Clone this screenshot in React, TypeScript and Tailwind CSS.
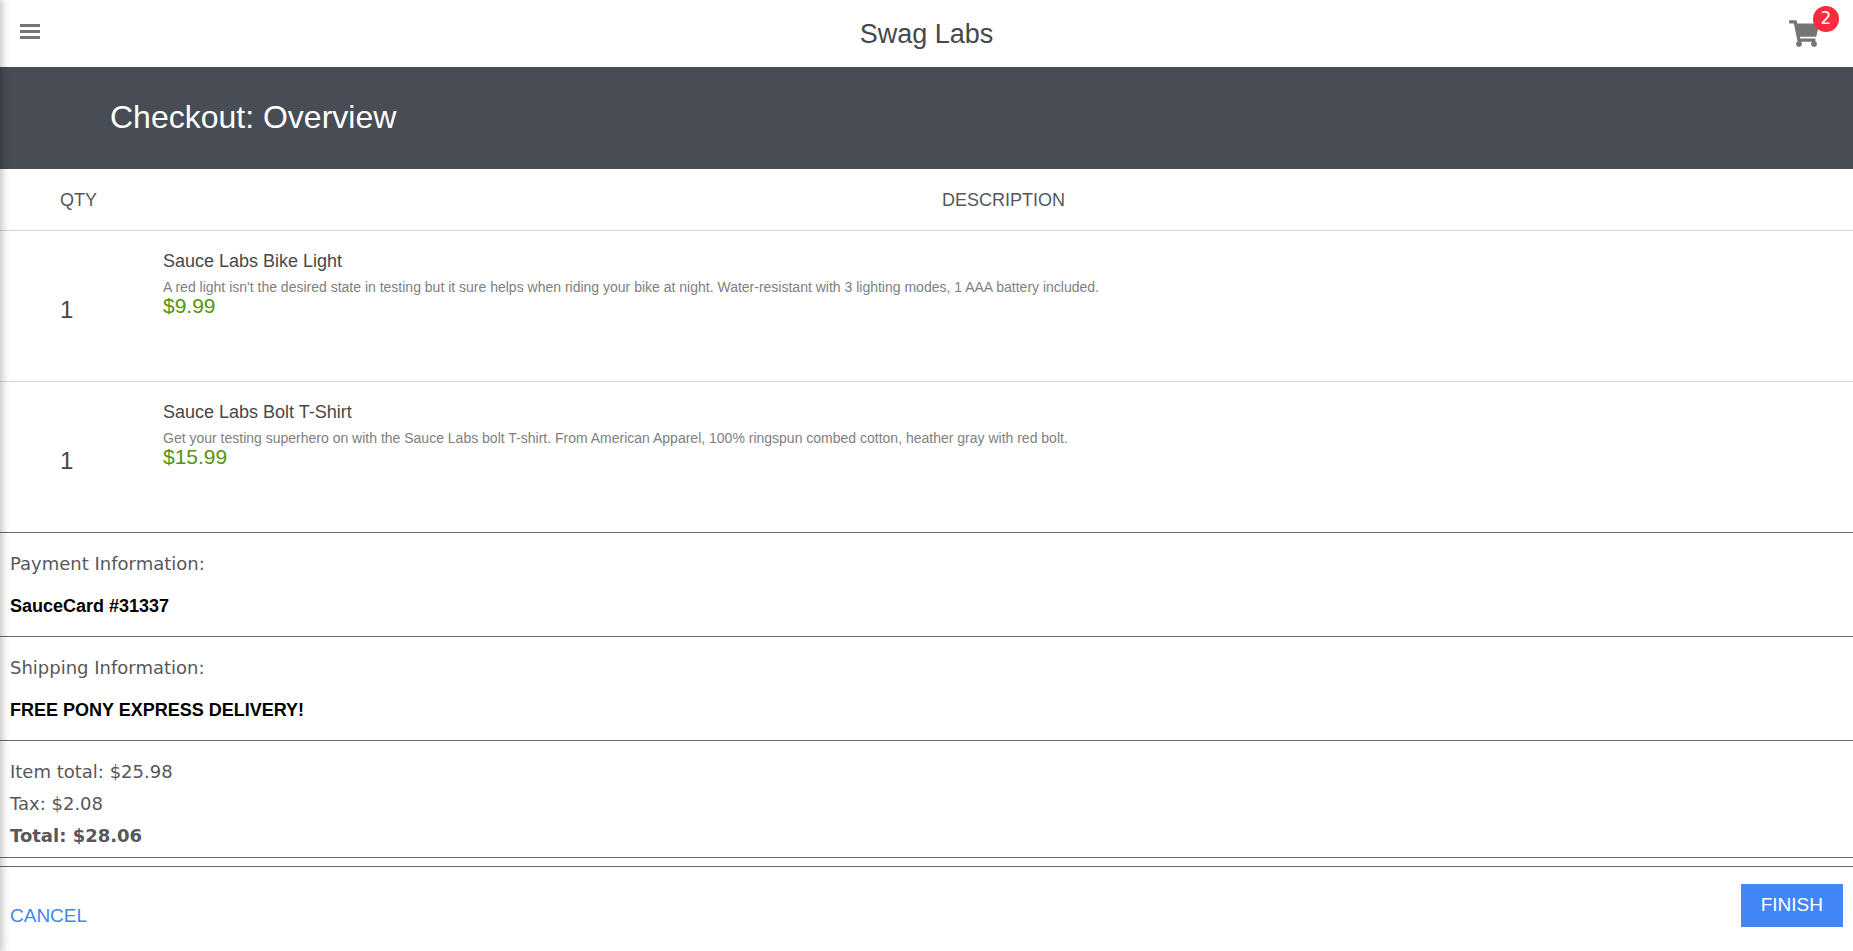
const items = [
  {
    qty: 1,
    name: "Sauce Labs Bike Light",
    description:
      "A red light isn't the desired state in testing but it sure helps when riding your bike at night. Water-resistant with 3 lighting modes, 1 AAA battery included.",
    price: "$9.99",
  },
  {
    qty: 1,
    name: "Sauce Labs Bolt T-Shirt",
    description:
      "Get your testing superhero on with the Sauce Labs bolt T-shirt. From American Apparel, 100% ringspun combed cotton, heather gray with red bolt.",
    price: "$15.99",
  },
];

function Header() {
  return (
    <header className="grid h-[67px] grid-cols-[1fr_auto_1fr] items-center bg-white px-5">
      <button type="button" aria-label="Open menu" className="mb-1 flex w-5 flex-col gap-[3px]">
        <span className="h-[3px] w-full bg-[#757575]" />
        <span className="h-[3px] w-full bg-[#757575]" />
        <span className="h-[3px] w-full bg-[#757575]" />
      </button>
      <h1 className="text-[27px] leading-8 text-[#484848]">Swag Labs</h1>
      <a href="#cart" aria-label="Cart" className="relative mr-3.5 justify-self-end">
        <svg viewBox="0 0 576 512" className="block h-[27px] w-[30px]" fill="#757575" aria-hidden="true">
          <path d="M528.12 301.319l47.273-208C578.806 78.301 567.391 64 551.99 64H159.208l-9.166-44.81C147.758 8.021 137.93 0 126.529 0H24C10.745 0 0 10.745 0 24v16c0 13.255 10.745 24 24 24h69.883l70.248 343.435C147.325 417.1 136 435.222 136 456c0 30.928 25.072 56 56 56s56-25.072 56-56c0-15.674-6.447-29.835-16.824-40h209.647C430.447 426.165 424 440.326 424 456c0 30.928 25.072 56 56 56s56-25.072 56-56c0-22.172-12.888-41.332-31.579-50.405l5.517-24.276c3.413-15.018-8.002-29.319-23.403-29.319H218.117l-6.545-32h293.145c11.206 0 20.92-7.754 23.403-18.681z" />
        </svg>
        <span className="absolute -top-3.5 -right-5 flex size-[26px] items-center justify-center rounded-full bg-[#ff2a3c] font-['DejaVu_Sans',sans-serif] text-[17px] text-white">
          2
        </span>
      </a>
    </header>
  );
}

function OrderTable() {
  return (
    <table className="w-full table-fixed border-separate border-spacing-0 text-left">
      <thead>
        <tr className="h-[62px] text-lg text-[#55575b]">
          <th scope="col" className="w-[154px] border-b border-[#d3d3d3] pl-[60px] font-normal">QTY</th>
          <th scope="col" className="border-b border-[#d3d3d3] text-center font-normal">DESCRIPTION</th>
        </tr>
      </thead>
      <tbody>
        {items.map((item) => (
          <tr key={item.name} className="group h-[151px]">
            <td className="border-b border-[#d3d3d3] pt-2 pl-[60px] text-2xl text-[#484848] group-last:border-[#6c6c70]">
              {item.qty}
            </td>
            <td className="border-b border-[#d3d3d3] pt-4 pl-[9px] align-top group-last:border-[#6c6c70]">
              <h3 className="text-lg leading-7 text-[#484848]">{item.name}</h3>
              <p className="mt-1 text-sm leading-4 text-[#808080]">{item.description}</p>
              <p className="text-[21px] leading-[22px] text-[#549608]">{item.price}</p>
            </td>
          </tr>
        ))}
      </tbody>
    </table>
  );
}

function InfoSection({ label, value }: { label: string; value: string }) {
  return (
    <section className="border-b border-[#6c6c70] px-2.5 pt-[15px] pb-4">
      <h3 className="font-['DejaVu_Sans',sans-serif] text-lg leading-8 text-[#58585a]">{label}</h3>
      <p className="mt-3 text-lg leading-7 font-bold text-black">{value}</p>
    </section>
  );
}

export default function App() {
  return (
    <div className="relative min-h-screen overflow-x-hidden bg-white font-['Liberation_Sans',Arial,sans-serif]">
      <Header />
      <main>
        <div className="flex h-[102px] items-center bg-[#484c55] px-[110px] pb-0.5">
          <h2 className="text-[32px] leading-10 text-white">Checkout: Overview</h2>
        </div>
        <OrderTable />
        <InfoSection label="Payment Information:" value="SauceCard #31337" />
        <InfoSection label="Shipping Information:" value="FREE PONY EXPRESS DELIVERY!" />
        <section className="border-b border-[#6c6c70] px-2.5 pt-[15px] pb-[5px] font-['DejaVu_Sans',sans-serif] text-lg leading-8 text-[#58585a]">
          <p>Item total: $25.98</p>
          <p>Tax: $2.08</p>
          <p className="font-bold">Total: $28.06</p>
        </section>
        <div className="mt-2 flex items-start justify-between border-t border-[#6c6c70] px-2.5 pt-[17px]">
          <a href="#cancel" className="mt-[18px] text-[19px] leading-7 text-[#4285f4]">CANCEL</a>
          <button type="button" className="h-[43px] bg-[#4285f4] px-5 text-[19px] text-white">FINISH</button>
        </div>
      </main>
      <div className="pointer-events-none absolute inset-y-0 right-full w-[300px] shadow-[0_0_8px_2px_rgba(0,0,0,0.25)]" />
    </div>
  );
}
